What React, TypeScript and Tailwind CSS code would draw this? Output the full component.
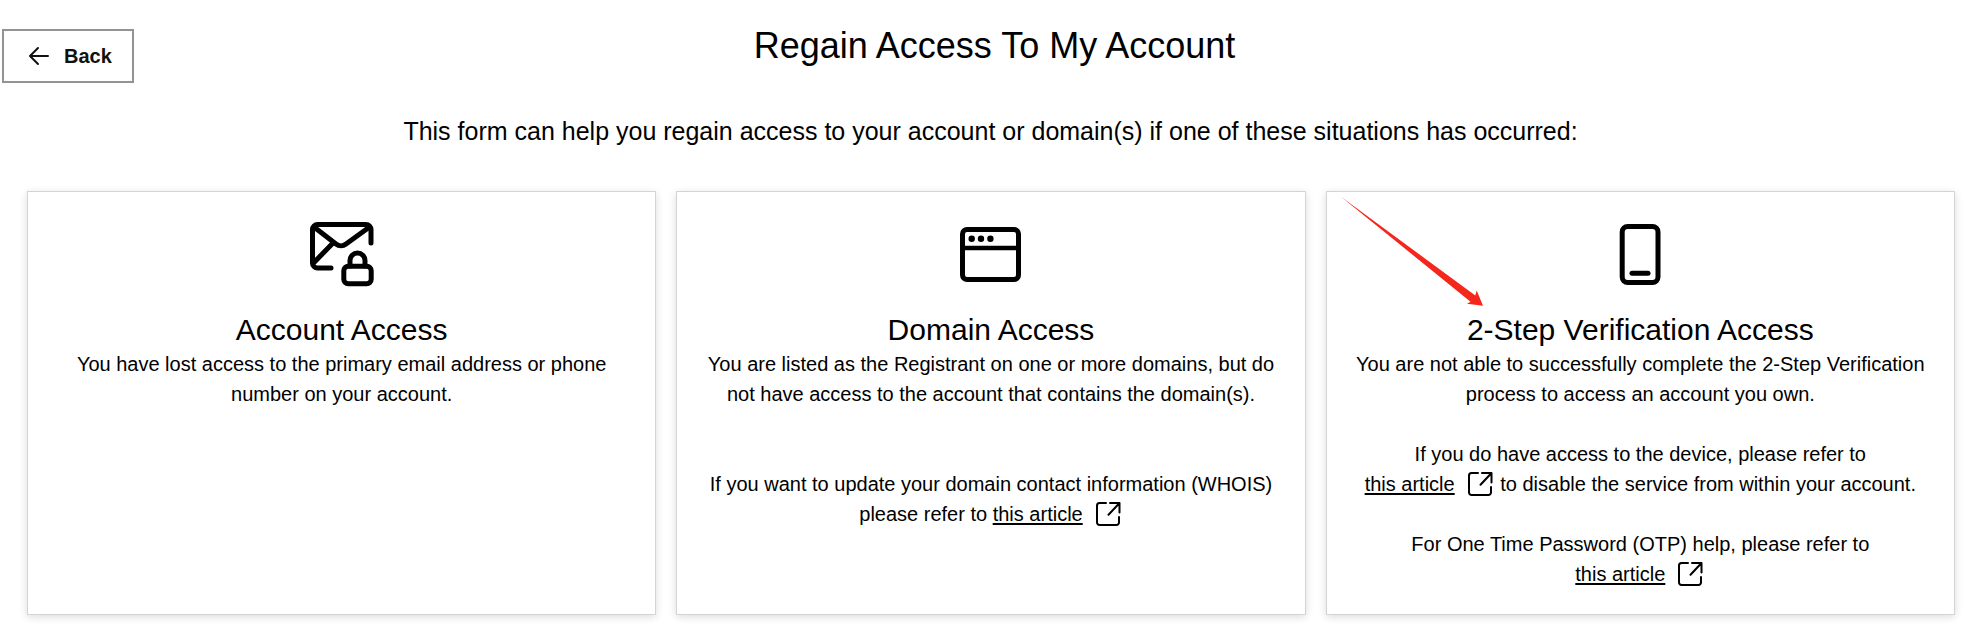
import type { ReactNode } from "react";

function MailLockIcon() {
  return (
    <svg viewBox="0 0 76 76" className="h-[76px] w-[76px]" fill="none" stroke="currentColor" strokeWidth="5" strokeLinecap="round" strokeLinejoin="round" aria-hidden="true">
      <path d="M27 52H13.500a5 5 0 0 1-5-5V13.500a5 5 0 0 1 5-5H62a5 5 0 0 1 5 5V27" />
      <path d="M10 11 32 28a8 8 0 0 0 10 0L65.500 11" />
      <path d="M10 46.500 28.500 27.500" />
      <rect x="39.800" y="50.300" width="27.400" height="17.500" rx="4.500" />
      <path d="M46 50V44.500a7.500 7.500 0 0 1 15 0V50" />
    </svg>
  );
}

function BrowserIcon() {
  return (
    <svg viewBox="0 0 76 76" className="h-[76px] w-[76px]" fill="none" stroke="currentColor" strokeWidth="5" aria-hidden="true">
      <rect x="9.500" y="13.500" width="56" height="50" rx="4.500" />
      <path d="M9.500 32H66" strokeWidth="4.500" />
      <g fill="currentColor" stroke="none">
        <circle cx="18.700" cy="22.700" r="3.200" />
        <circle cx="28" cy="22.700" r="3.200" />
        <circle cx="37.400" cy="22.700" r="3.200" />
      </g>
    </svg>
  );
}

function PhoneIcon() {
  return (
    <svg viewBox="0 0 76 76" className="h-[76px] w-[76px]" fill="none" stroke="currentColor" strokeWidth="5" strokeLinecap="round" aria-hidden="true">
      <rect x="20.200" y="10.500" width="35.800" height="56" rx="5.500" />
      <path d="M30 57.200H46" />
    </svg>
  );
}

function ExternalIcon() {
  return (
    <svg viewBox="0 0 30 30" className="ml-2.5 inline-block h-[30px] w-[30px] align-top" fill="none" stroke="currentColor" strokeWidth="2" strokeLinecap="round" strokeLinejoin="round" aria-hidden="true">
      <path d="M13 4H6.500A2.500 2.500 0 0 0 4 6.500v17A2.500 2.500 0 0 0 6.500 26h17a2.500 2.500 0 0 0 2.500-2.500V18" />
      <path d="M17 4H26.500v9.500M26.500 4 15.500 15.800" />
    </svg>
  );
}

function RedArrow() {
  return (
    <svg viewBox="0 0 144 112" className="pointer-events-none absolute left-3.5 top-1 h-28 w-36" fill="#f5261b" aria-hidden="true">
      <path d="M0 0.800 134.300 99.500 135.700 94.500 142 109.800 126 107.700 129.500 105.700Z" />
    </svg>
  );
}

function ArticleLink() {
  return (
    <a href="#article" className="whitespace-nowrap underline decoration-2 underline-offset-2">
      this article
      <ExternalIcon />
    </a>
  );
}

type CardProps = {
  icon: ReactNode;
  title: string;
  children: ReactNode;
};

function Card({ icon, title, children }: CardProps) {
  return (
    <section className="relative flex flex-col items-center border border-[#d4d4d4] bg-white px-6 pt-6 pb-[25px] text-center shadow-[0_2px_8px_rgba(0,0,0,0.14)]">
      {icon}
      <h2 className="mt-[19px] text-3xl leading-[38px]">{title}</h2>
      {children}
    </section>
  );
}

export default function App() {
  return (
    <main className="bg-white pb-[26px] font-['Liberation_Sans',Arial,sans-serif] text-black">
      <header className="grid grid-cols-[1fr_auto_1fr] items-start pl-0.5">
        <button type="button" className="mt-[29px] flex h-[54px] w-[132px] items-center gap-3 border-2 border-[#939393] pl-6 text-xl font-bold text-[#111]">
          <svg viewBox="0 0 24 24" className="h-6 w-6" fill="none" stroke="currentColor" strokeWidth="2" strokeLinecap="round" strokeLinejoin="round" aria-hidden="true">
            <path d="M20 12H2M10 4 2 12 10 20" />
          </svg>
          Back
        </button>
        <h1 className="mt-6 pl-2.5 text-4xl leading-11">Regain Access To My Account</h1>
      </header>

      <p className="mt-8 pl-1 text-center text-[25px] leading-8">
        This form can help you regain access to your account or domain(s) if one of these situations has occurred:
      </p>

      <div className="mt-11 grid grid-cols-3 gap-5 pl-[27px] pr-[22px] text-xl leading-[30px]">
        <Card icon={<MailLockIcon />} title="Account Access">
          <p>You have lost access to the primary email address or phone number on your account.</p>
        </Card>

        <Card icon={<BrowserIcon />} title="Domain Access">
          <p>You are listed as the Registrant on one or more domains, but do not have access to the account that contains the domain(s).</p>
          <p className="mt-[60px]">
            If you want to update your domain contact information (WHOIS) please refer to <ArticleLink />
          </p>
        </Card>

        <Card icon={<PhoneIcon />} title="2-Step Verification Access">
          <RedArrow />
          <p>You are not able to successfully complete the 2-Step Verification process to access an account you own.</p>
          <p className="mt-[30px]">
            If you do have access to the device, please refer to
            <br />
            <ArticleLink /> to disable the service from within your account.
          </p>
          <p className="mt-[30px]">
            For One Time Password (OTP) help, please refer to
            <br />
            <ArticleLink />
          </p>
        </Card>
      </div>
    </main>
  );
}
